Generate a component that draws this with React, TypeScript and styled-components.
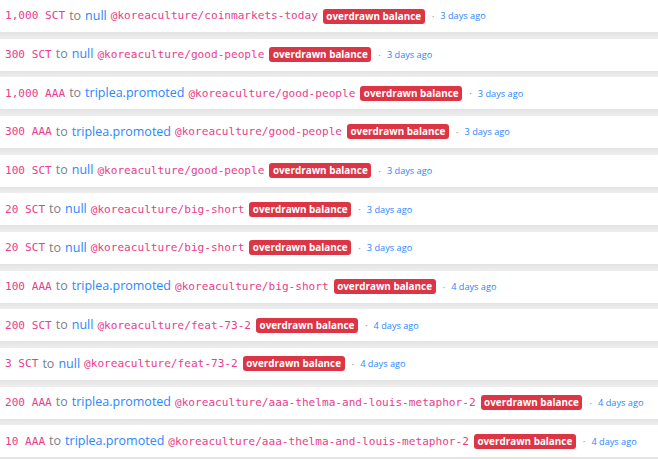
import { type FC } from "react";
import styled, { createGlobalStyle } from "styled-components";

const GlobalStyle = createGlobalStyle`
  body {
    margin: 0;
    background: #ffffff;
    font-family: "Open Sans", "Liberation Sans", sans-serif;
  }
`;

const List = styled.ul`
  list-style: none;
  margin: 0;
  padding: 0;
  width: 658px;
`;

const Item = styled.li`
  display: flex;
  flex-direction: column;
  height: 38.667px;
`;

const Line = styled.div`
  display: flex;
  align-items: center;
  height: 32px;
  padding-left: 5px;
  white-space: nowrap;
  font-size: 12.5px;
  line-height: 1;
`;

const Divider = styled.div`
  flex: 1;
  background: linear-gradient(to bottom, #e3e3e3 0%, #eeeeee 100%);
`;

const Code = styled.code`
  font-family: "DejaVu Sans Mono", "Liberation Mono", monospace;
  font-size: 11.1px;
  color: #e83e8c;
`;

const Muted = styled.span`
  color: #7b8288;
  margin: 0 4px;
`;

const Account = styled.a`
  color: #2a86ff;
  text-decoration: none;
  margin-right: 4px;
`;

const Badge = styled.span`
  display: inline-block;
  margin-left: 5px;
  padding: 2px 3.5px 3px;
  border-radius: 3px;
  background: #dc3545;
  color: #ffffff;
  font-size: 9.9px;
  font-weight: 700;
  line-height: 10px;
`;

const Dot = styled.span`
  color: #9aa0a6;
  font-size: 10px;
  margin: 0 6px 0 7px;
`;

const Time = styled.a`
  color: #2a86ff;
  font-size: 9.2px;
  text-decoration: none;
`;

type Transfer = {
  amount: string;
  to: string;
  memo: string;
  ago: string;
};

const transfers: Transfer[] = [
  { amount: "1,000 SCT", to: "null", memo: "@koreaculture/coinmarkets-today", ago: "3 days ago" },
  { amount: "300 SCT", to: "null", memo: "@koreaculture/good-people", ago: "3 days ago" },
  { amount: "1,000 AAA", to: "triplea.promoted", memo: "@koreaculture/good-people", ago: "3 days ago" },
  { amount: "300 AAA", to: "triplea.promoted", memo: "@koreaculture/good-people", ago: "3 days ago" },
  { amount: "100 SCT", to: "null", memo: "@koreaculture/good-people", ago: "3 days ago" },
  { amount: "20 SCT", to: "null", memo: "@koreaculture/big-short", ago: "3 days ago" },
  { amount: "20 SCT", to: "null", memo: "@koreaculture/big-short", ago: "3 days ago" },
  { amount: "100 AAA", to: "triplea.promoted", memo: "@koreaculture/big-short", ago: "4 days ago" },
  { amount: "200 SCT", to: "null", memo: "@koreaculture/feat-73-2", ago: "4 days ago" },
  { amount: "3 SCT", to: "null", memo: "@koreaculture/feat-73-2", ago: "4 days ago" },
  { amount: "200 AAA", to: "triplea.promoted", memo: "@koreaculture/aaa-thelma-and-louis-metaphor-2", ago: "4 days ago" },
  { amount: "10 AAA", to: "triplea.promoted", memo: "@koreaculture/aaa-thelma-and-louis-metaphor-2", ago: "4 days ago" },
];

const TransferRow: FC<Transfer> = ({ amount, to, memo, ago }) => (
  <Item>
    <Line>
      <Code>{amount}</Code>
      <Muted>to</Muted>
      <Account href="#">{to}</Account>
      <Code>{memo}</Code>
      <Badge>overdrawn balance</Badge>
      <Dot>·</Dot>
      <Time href="#">{ago}</Time>
    </Line>
    <Divider />
  </Item>
);

const App: FC = () => (
  <>
    <GlobalStyle />
    <List>
      {transfers.map((t, i) => (
        <TransferRow key={i} {...t} />
      ))}
    </List>
  </>
);

export default App;
